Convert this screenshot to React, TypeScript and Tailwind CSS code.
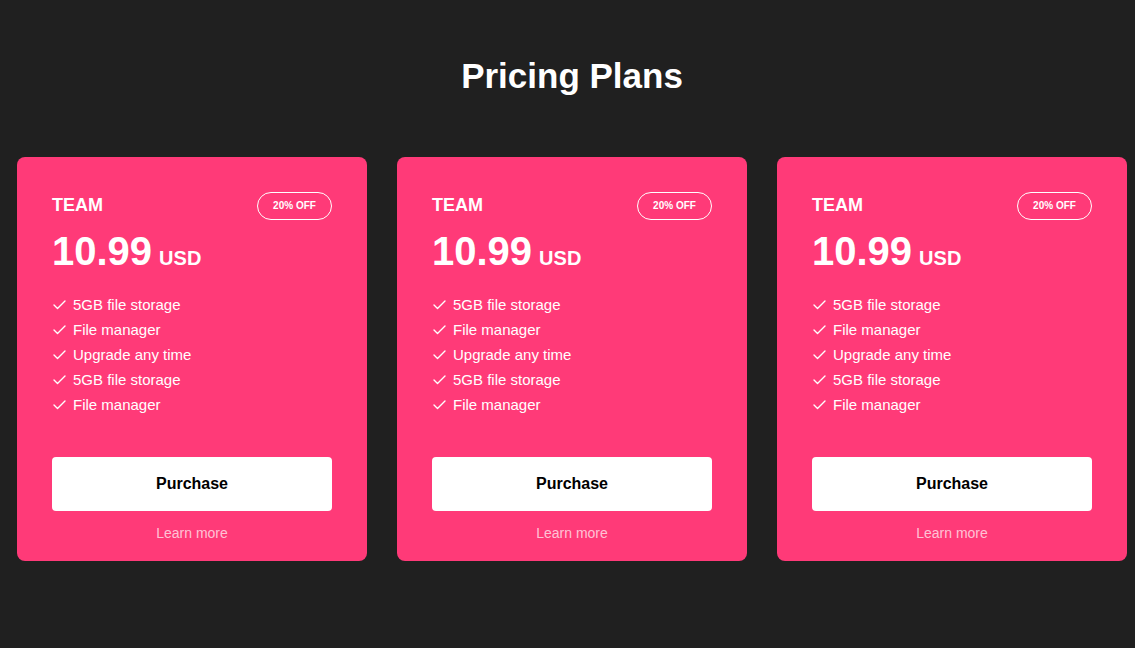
import React from 'react';

const features = ['5GB file storage', 'File manager', 'Upgrade any time', '5GB file storage', 'File manager'];

function Check() {
  return (
    <svg width="14" height="14" viewBox="0 0 14 14" fill="none" className="shrink-0">
      <path d="M2 7l3.5 3.5L13 3" stroke="white" strokeWidth="1.4" strokeLinecap="round" strokeLinejoin="round" />
    </svg>
  );
}

function PlanCard() {
  return (
    <div className="w-[350px] rounded-lg bg-[#ff3a78] px-[35px] pt-[35px] pb-[18px] text-white">
      {/* Header */}
      <div className="flex h-[28px] items-start justify-between">
        <span className="pt-[4px] text-[18px] font-bold leading-none">TEAM</span>
        <span className="flex h-[28px] w-[75px] items-center justify-center rounded-full border border-white text-[10px] font-bold leading-none">
          20% OFF
        </span>
      </div>

      {/* Price */}
      <div className="mt-[11px] flex items-baseline gap-[7px] leading-none">
        <span className="text-[40px] font-bold">10.99</span>
        <span className="text-[20px] font-bold">USD</span>
      </div>

      {/* Features */}
      <ul className="mt-[21px]">
        {features.map((f, i) => (
          <li key={i} className="flex h-[25px] items-center gap-[7px] text-[15px] leading-[25px]">
            <Check />
            <span>{f}</span>
          </li>
        ))}
      </ul>

      <button className="mt-[40px] flex h-[54px] w-full items-center justify-center rounded bg-white text-[16px] font-bold text-black">
        Purchase
      </button>
      <div className="mt-[12px] text-center text-[14px] leading-[20px] text-white/70">Learn more</div>
    </div>
  );
}

export default function App() {
  return (
    <div className="min-h-screen bg-[#202020] font-['Liberation_Sans',Arial,sans-serif]">
      <div className="ml-[17px] w-[1110px] pt-[58px]">
        <h1 className="text-center text-[35px] font-bold leading-none text-white">Pricing Plans</h1>
        <div className="mt-[64px] flex gap-[30px]">
          <PlanCard />
          <PlanCard />
          <PlanCard />
        </div>
      </div>
    </div>
  );
}
